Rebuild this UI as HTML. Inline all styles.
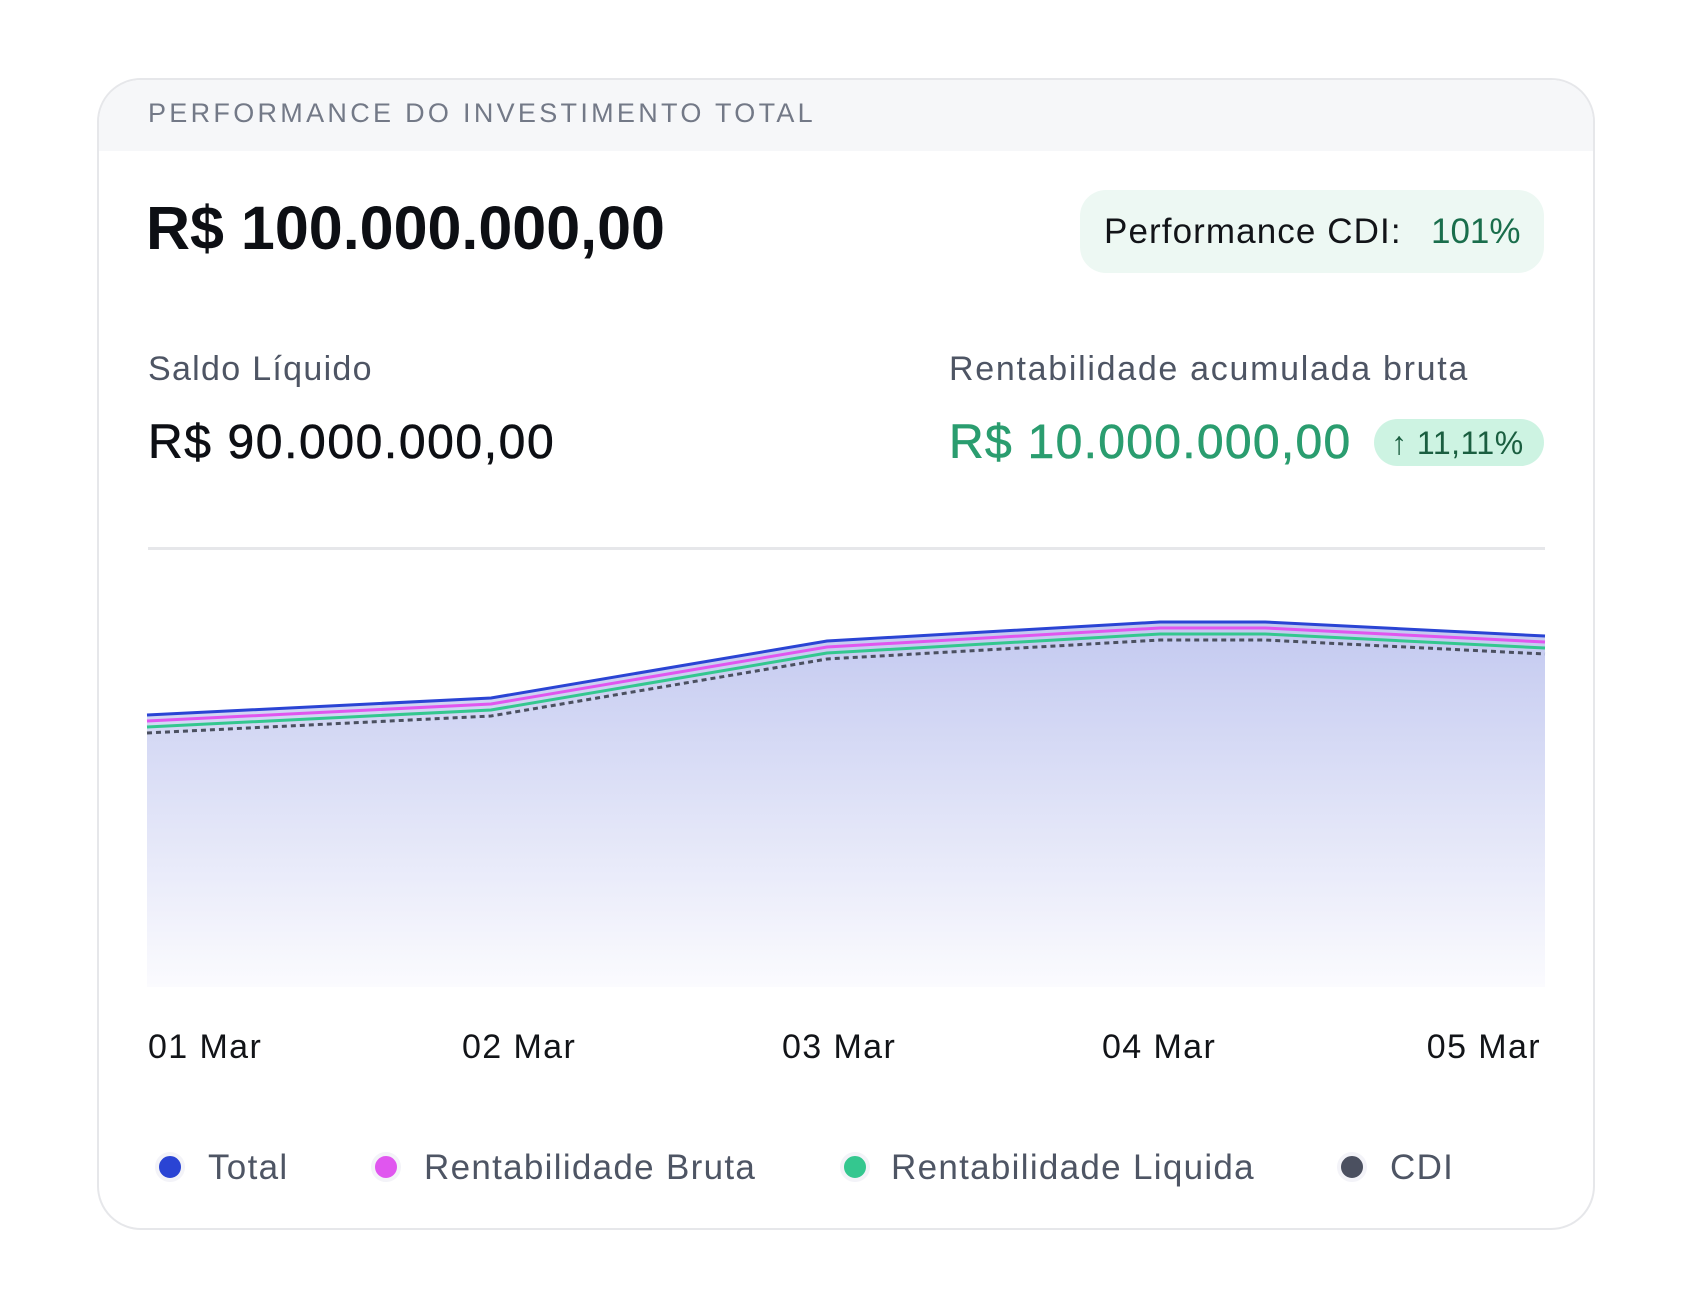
<!DOCTYPE html>
<html><head><meta charset="utf-8"><style>
*{margin:0;padding:0;box-sizing:border-box}
body{width:1692px;height:1309px;background:#fff;font-family:"Liberation Sans",sans-serif;position:relative;overflow:hidden}
.card{position:absolute;left:97px;top:78px;width:1498px;height:1152px;border:2px solid #e6e7ea;border-radius:44px;overflow:hidden;background:#fff}
.hdr{position:absolute;left:0;top:0;width:100%;height:71px;background:#f6f7f9}
.t{position:absolute;white-space:nowrap;line-height:1}
.x{font-size:34px;color:#121418;top:1030px;letter-spacing:1.4px}
.lg{font-size:35px;color:#4e5564;top:1150px;letter-spacing:1.3px}
</style></head><body>
<div class="card"><div class="hdr"></div></div>
<div class="t" style="left:148px;top:100px;font-size:27px;letter-spacing:3.3px;color:#737987">PERFORMANCE DO INVESTIMENTO TOTAL</div>
<div class="t" style="left:146px;top:198px;font-size:61px;font-weight:bold;letter-spacing:0px;color:#0d0f14">R$ 100.000.000,00</div>
<div style="position:absolute;left:1080px;top:190px;width:464px;height:83px;border-radius:26px;background:#edf8f3"></div>
<div class="t" style="left:1104px;top:214px;font-size:35px;letter-spacing:1.1px;color:#121418">Performance CDI:</div>
<div class="t" style="left:1431px;top:214px;font-size:35px;color:#1a6e4c">101%</div>
<div class="t" style="left:148px;top:352px;font-size:34px;letter-spacing:1.3px;color:#4e5564">Saldo Líquido</div>
<div class="t" style="left:148px;top:419px;font-size:48px;letter-spacing:1.6px;color:#0d0f14;-webkit-text-stroke:0.6px #0d0f14">R$ 90.000.000,00</div>
<div class="t" style="left:949px;top:352px;font-size:34px;letter-spacing:1.7px;color:#4e5564">Rentabilidade acumulada bruta</div>
<div class="t" style="left:949px;top:419px;font-size:48px;letter-spacing:1.3px;color:#2a9d6f;-webkit-text-stroke:0.6px #2a9d6f">R$ 10.000.000,00</div>
<div style="position:absolute;left:1374px;top:419px;width:170px;height:47px;border-radius:24px;background:#cdf3e2"></div>
<div class="t" style="left:1391px;top:427px;font-size:32px;letter-spacing:0.5px;color:#1a5e40">↑ 11,11%</div>
<div style="position:absolute;left:148px;top:547px;width:1397px;height:3px;background:#e6e7ea"></div>
<svg style="position:absolute;left:0;top:0" width="1692" height="1309">
<defs><linearGradient id="g" x1="0" y1="0" x2="0" y2="1"><stop offset="0" stop-color="#c3c9f0"/><stop offset="1" stop-color="#fbfbfe"/></linearGradient></defs>
<path d="M147,715 L491,698 L827,641 L1160,622 L1265,622 L1545,636 L1545,987 L147,987 Z" fill="url(#g)"/>
<polyline points="147,733 491,716 827,659 1160,640 1265,640 1545,654" fill="none" stroke="#4b5060" stroke-width="3" stroke-dasharray="5,4"/>
<polyline points="147,727 491,710 827,653 1160,634 1265,634 1545,648" fill="none" stroke="#34c78f" stroke-width="3"/>
<polyline points="147,721 491,704 827,647 1160,628 1265,628 1545,642" fill="none" stroke="#e056ef" stroke-width="3"/>
<polyline points="147,715 491,698 827,641 1160,622 1265,622 1545,636" fill="none" stroke="#2a44d4" stroke-width="3"/>
<g stroke="#f3f3f8" stroke-width="4">
<circle cx="170" cy="1167" r="13" fill="#2a44d4"/>
<circle cx="386" cy="1167" r="13" fill="#e056ef"/>
<circle cx="855" cy="1167" r="13" fill="#34c78f"/>
<circle cx="1352" cy="1167" r="13" fill="#4b5060"/>
</g>
</svg>
<div class="t x" style="left:148px">01 Mar</div>
<div class="t x" style="left:462px">02 Mar</div>
<div class="t x" style="left:782px">03 Mar</div>
<div class="t x" style="left:1102px">04 Mar</div>
<div class="t x" style="right:151px">05 Mar</div>
<div class="t lg" style="left:208px">Total</div>
<div class="t lg" style="left:424px">Rentabilidade Bruta</div>
<div class="t lg" style="left:891px">Rentabilidade Liquida</div>
<div class="t lg" style="left:1390px">CDI</div>
</body></html>
